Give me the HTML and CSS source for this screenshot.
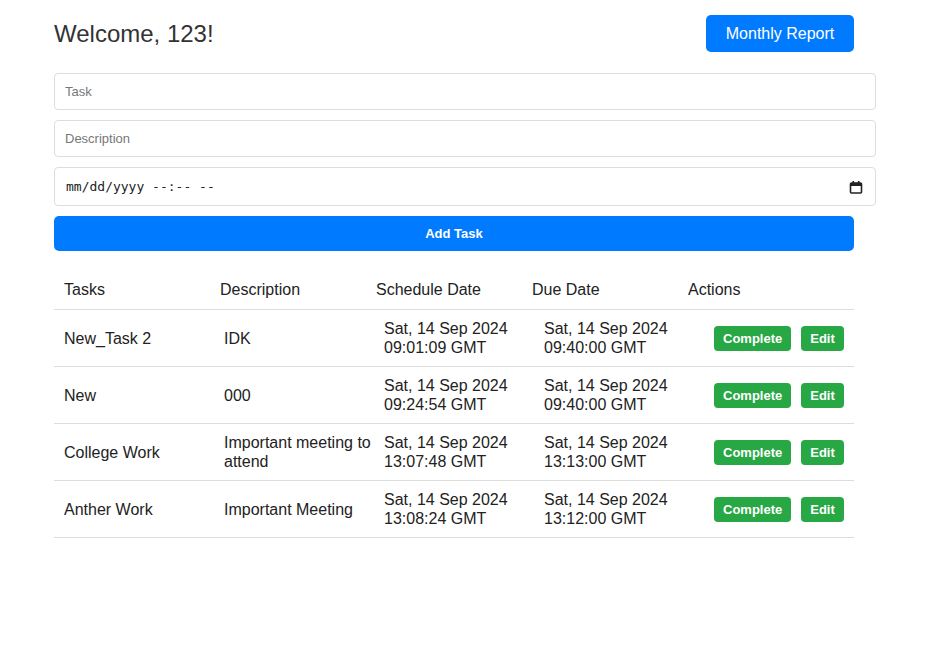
FILE: index.html
```html
<!DOCTYPE html>
<html>
<head>
<meta charset="utf-8">
<link rel="stylesheet" href="styles.css">
</head>
<body>
<div class="container">
  <div class="top">
    <h1 class="welcome">Welcome, 123!</h1>
    <button class="btn-primary report">Monthly Report</button>
  </div>
  <form class="task-form">
    <input class="field" type="text" placeholder="Task">
    <input class="field" type="text" placeholder="Description">
    <div class="field date">
      <span class="date-text">mm/dd/yyyy --:-- --</span>
      <svg class="cal" width="14" height="14" viewBox="0 0 14 14">
        <rect x="1.5" y="3" width="11" height="10" rx="1" fill="none" stroke="#222" stroke-width="1.6"/>
        <rect x="1.5" y="3" width="11" height="3" fill="#222"/>
        <rect x="3.5" y="1" width="1.6" height="3" fill="#222"/>
        <rect x="8.9" y="1" width="1.6" height="3" fill="#222"/>
      </svg>
    </div>
    <button type="button" class="btn-primary add">Add Task</button>
  </form>
  <div class="table">
    <div class="thead">
      <div>Tasks</div><div>Description</div><div>Schedule Date</div><div>Due Date</div><div>Actions</div>
    </div>
    <div class="row">
      <div class="c1">New_Task 2</div>
      <div class="c2">IDK</div>
      <div class="c3">Sat, 14 Sep 2024<br>09:01:09 GMT</div>
      <div class="c4">Sat, 14 Sep 2024<br>09:40:00 GMT</div>
      <div class="c5"><button class="btn-success">Complete</button><button class="btn-success">Edit</button></div>
    </div>
    <div class="row">
      <div class="c1">New</div>
      <div class="c2">000</div>
      <div class="c3">Sat, 14 Sep 2024<br>09:24:54 GMT</div>
      <div class="c4">Sat, 14 Sep 2024<br>09:40:00 GMT</div>
      <div class="c5"><button class="btn-success">Complete</button><button class="btn-success">Edit</button></div>
    </div>
    <div class="row">
      <div class="c1">College Work</div>
      <div class="c2">Important meeting to attend</div>
      <div class="c3">Sat, 14 Sep 2024<br>13:07:48 GMT</div>
      <div class="c4">Sat, 14 Sep 2024<br>13:13:00 GMT</div>
      <div class="c5"><button class="btn-success">Complete</button><button class="btn-success">Edit</button></div>
    </div>
    <div class="row">
      <div class="c1">Anther Work</div>
      <div class="c2">Important Meeting</div>
      <div class="c3">Sat, 14 Sep 2024<br>13:08:24 GMT</div>
      <div class="c4">Sat, 14 Sep 2024<br>13:12:00 GMT</div>
      <div class="c5"><button class="btn-success">Complete</button><button class="btn-success">Edit</button></div>
    </div>
  </div>
</div>
</body>
</html>
```
FILE: styles.css
```css
* { margin: 0; }
body {
  margin: 0;
  background: #fff;
  font-family: "Liberation Sans", Arial, sans-serif;
  color: #222;
}
.container {
  width: 800px;
  padding: 15px 0 0 54px;
}
.top {
  display: flex;
  justify-content: space-between;
  align-items: center;
  margin-bottom: 21px;
}
.welcome {
  font-size: 24px;
  font-weight: normal;
  color: #333;
}
.btn-primary {
  background: #007bff;
  color: #fff;
  border: none;
  border-radius: 5px;
  font-family: "Liberation Sans", Arial, sans-serif;
  cursor: pointer;
}
.report {
  width: 148px;
  height: 37px;
  font-size: 16px;
}
.task-form {
  display: flex;
  flex-direction: column;
  gap: 10px;
}
.field {
  width: 100%;
  box-sizing: content-box;
  padding: 10px;
  height: 15px;
  border: 1px solid #ddd;
  border-radius: 4px;
  font-family: "Liberation Sans", Arial, sans-serif;
  font-size: 13px;
  color: #333;
  outline: none;
}
.field::placeholder { color: #777; }
.field.date {
  height: 17px;
  display: flex;
  align-items: center;
  justify-content: space-between;
  padding: 10px 10px 10px 11px;
  width: 799px;
  font-family: "DejaVu Sans Mono", monospace;
  font-size: 13px;
  color: #222;
}
.date-text { white-space: pre; }
.cal { display: block; margin-right: 2px; }
.add {
  width: 800px;
  height: 35px;
  font-size: 13px;
  font-weight: bold;
}
.table {
  margin-top: 20px;
  font-size: 16px;
}
.thead {
  display: grid;
  grid-template-columns: 156px 156px 156px 156px 1fr;
  border-bottom: 1px solid #ddd;
}
.thead > div {
  padding: 10px;
  line-height: 18px;
  color: #222;
}
.row {
  display: grid;
  grid-template-columns: 160px 160px 160px 160px 1fr;
  align-items: center;
  border-bottom: 1px solid #ddd;
  height: 56px;
}
.row > div {
  padding: 0 10px;
  line-height: 19px;
  color: #222;
}
.row .c2 { padding-right: 0; }
.row .c5 {
  display: flex;
  gap: 10px;
  padding-left: 20px;
}
.btn-success {
  background: #28a745;
  color: #fff;
  border: none;
  border-radius: 4px;
  height: 25px;
  padding: 0 9px;
  font-family: "Liberation Sans", Arial, sans-serif;
  font-size: 13px;
  font-weight: bold;
  cursor: pointer;
}
```
